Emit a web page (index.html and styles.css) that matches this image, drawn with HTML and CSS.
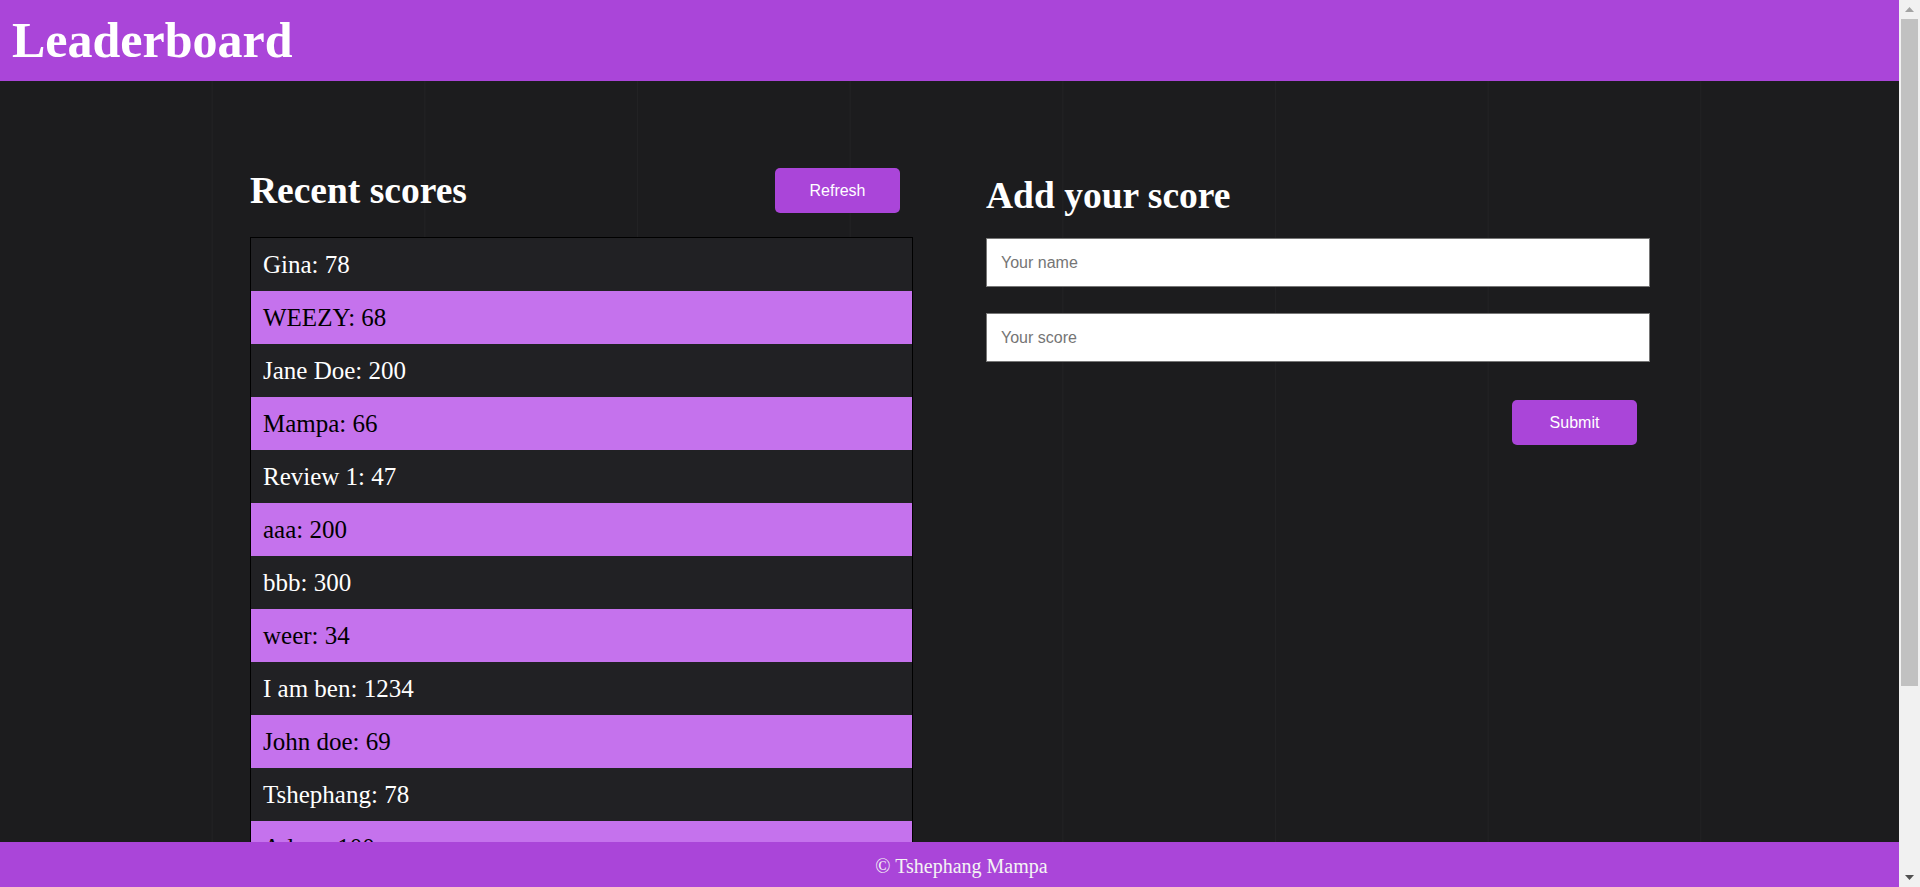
FILE: index.html
```html
<!DOCTYPE html>
<html lang="en">
<head>
<meta charset="utf-8">
<title>Leaderboard</title>
<link rel="stylesheet" href="styles.css">
</head>
<body>
<header class="topbar">
  <h1 class="brand">Leaderboard</h1>
</header>
<main class="board">
  <section class="scores">
    <div class="scores-head">
      <h2 class="section-title">Recent scores</h2>
      <button class="btn" type="button">Refresh</button>
    </div>
    <ul class="score-list">
      <li class="score-row">Gina: 78</li>
      <li class="score-row">WEEZY: 68</li>
      <li class="score-row">Jane Doe: 200</li>
      <li class="score-row">Mampa: 66</li>
      <li class="score-row">Review 1: 47</li>
      <li class="score-row">aaa: 200</li>
      <li class="score-row">bbb: 300</li>
      <li class="score-row">weer: 34</li>
      <li class="score-row">I am ben: 1234</li>
      <li class="score-row">John doe: 69</li>
      <li class="score-row">Tshephang: 78</li>
      <li class="score-row">Adam: 100</li>
      <li class="score-row">Player: 55</li>
      <li class="score-row">Lerato: 90</li>
      <li class="score-row">Sam: 42</li>
      <li class="score-row">Thabo: 120</li>
    </ul>
  </section>
  <section class="add">
    <h2 class="section-title add-title">Add your score</h2>
    <form class="add-form">
      <input class="field" type="text" placeholder="Your name">
      <input class="field" type="text" placeholder="Your score">
      <div class="form-actions">
        <button class="btn" type="button">Submit</button>
      </div>
    </form>
  </section>
</main>
<footer class="footbar">© Tshephang Mampa</footer>
<div class="scrollbar" aria-hidden="true">
  <div class="sb-btn">
    <svg width="21" height="19" viewBox="0 0 21 19"><path d="M6 12h9l-4.5-5z" fill="#a3a3a3"/></svg>
  </div>
  <div class="sb-track"><div class="sb-thumb"></div></div>
  <div class="sb-btn">
    <svg width="21" height="19" viewBox="0 0 21 19"><path d="M6 7h9l-4.5 5z" fill="#505050"/></svg>
  </div>
</div>
</body>
</html>
```
FILE: styles.css
```css
* {
  box-sizing: border-box;
}

body {
  margin: 0;
  background: #1c1c1e;
  color: #ffffff;
  font-family: "Liberation Serif", "Times New Roman", serif;
}

.topbar {
  background: #aa45d9;
  height: 81px;
  padding: 0 12px;
  display: flex;
  align-items: center;
}

.brand {
  margin: 0;
  font-size: 50px;
  font-weight: 700;
  line-height: 55px;
  color: #ffffff;
}

.board {
  display: grid;
  grid-template-columns: 663px 664px;
  column-gap: 73px;
  align-items: start;
  padding: 87px 0 47px 250px;
  background-color: #1c1c1e;
  background-image: linear-gradient(90deg, transparent calc(100% - 1px), #222224 calc(100% - 1px));
  background-size: 212.67px 100%;
  min-height: 806px;
}

.scores-head {
  display: flex;
  justify-content: space-between;
  align-items: center;
  height: 45px;
  padding-right: 13px;
}

.section-title {
  margin: 0;
  font-size: 37.5px;
  font-weight: 700;
  line-height: 41px;
  color: #ffffff;
}

.btn {
  width: 125px;
  height: 45px;
  border: none;
  border-radius: 5px;
  background: #aa45d9;
  color: #ffffff;
  font-family: "Liberation Sans", Arial, sans-serif;
  font-size: 16px;
  cursor: pointer;
}

.score-list {
  list-style: none;
  margin: 24px 0 0;
  padding: 0;
  border: 1px solid #000000;
}

.score-row {
  font-size: 25px;
  line-height: 53px;
  height: 53px;
  padding: 0 12px;
  background: #212124;
  color: #ffffff;
}

.score-row:nth-child(even) {
  background: #c572ed;
  color: #000000;
}

.add-title {
  margin: 7px 0 22px;
}

.add-form {
  display: flex;
  flex-direction: column;
}

.field {
  width: 100%;
  height: 49px;
  margin: 0 0 26px;
  padding: 0 14px;
  border: 1px solid #767676;
  background: #ffffff;
  font-family: "Liberation Sans", Arial, sans-serif;
  font-size: 16px;
  color: #000000;
}

.field::placeholder {
  color: #757575;
}

.form-actions {
  display: flex;
  justify-content: flex-end;
  padding-right: 13px;
  margin-top: 12px;
}

.footbar {
  position: fixed;
  left: 0;
  right: 0;
  bottom: 0;
  height: 45px;
  padding: 13px 0 0 3px;
  background: #aa45d9;
  color: #f4f4f4;
  text-align: center;
  font-size: 20px;
  line-height: 23px;
}

.scrollbar {
  position: fixed;
  top: 0;
  right: 0;
  bottom: 0;
  width: 21px;
  display: flex;
  flex-direction: column;
  background: #f1f1f1;
  z-index: 10;
}

.sb-btn {
  height: 19px;
  flex: none;
}

.sb-btn svg {
  display: block;
}

.sb-track {
  flex: 1;
  padding: 0 2px;
}

.sb-thumb {
  height: 667px;
  background: #c1c1c1;
}
```
